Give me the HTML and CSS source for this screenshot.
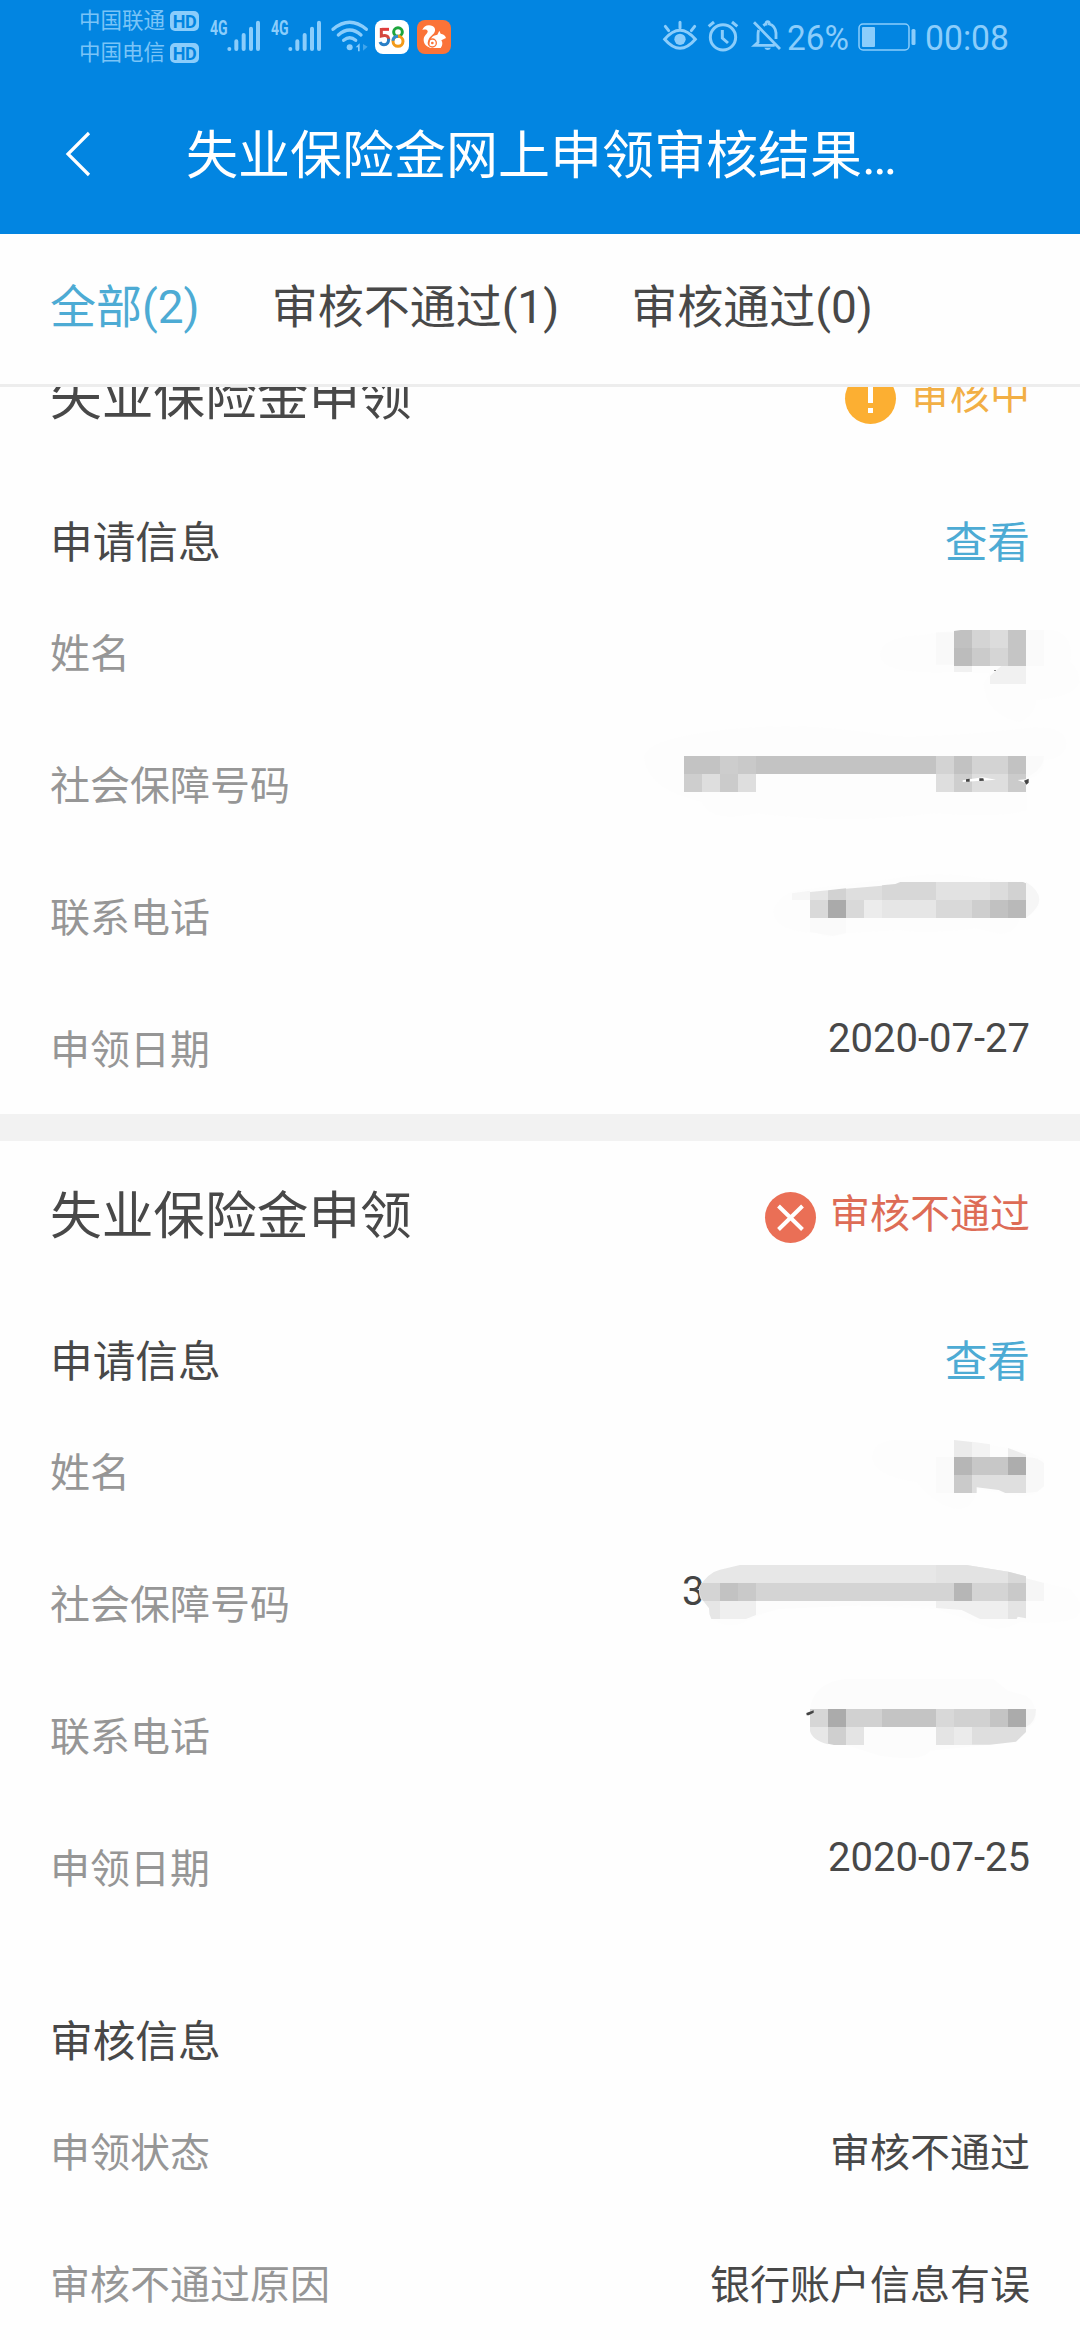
FILE: index.html
```html
<!DOCTYPE html>
<html lang="zh-CN">
<head>
<meta charset="utf-8">
<title>失业保险金网上申领审核结果</title>
<link rel="stylesheet" href="styles.css">
</head>
<body>
<header class="header">
  <div class="status">
    <div class="carriers">
      <div class="carrier"><span>中国联通</span><b class="hd">HD</b></div>
      <div class="carrier"><span>中国电信</span><b class="hd">HD</b></div>
    </div>
    <svg class="signal" width="51" height="32" viewBox="0 0 153 96"><text x="0" y="44" font-size="58" font-weight="700" textLength="53" lengthAdjust="spacingAndGlyphs">4G</text><path d="M58 87v0M79 64v23M101 45v42M123 26v61M144 8v79" stroke-width="12" stroke-linecap="round"/></svg>
    <svg class="signal" width="51" height="32" viewBox="0 0 153 96"><text x="0" y="44" font-size="58" font-weight="700" textLength="53" lengthAdjust="spacingAndGlyphs">4G</text><path d="M58 87v0M79 64v23M101 45v42M123 26v61M144 8v79" stroke-width="12" stroke-linecap="round"/></svg>
    <svg class="wifi" width="38" height="32" viewBox="0 0 114 96"><g fill="none" stroke-width="10" stroke-linecap="round"><path d="M6 28Q56-14 106 28M22 45Q56 15 90 45M38 61Q56 46 74 61"/></g><circle cx="56" cy="82" r="9"/><path d="M74 82l12-12v24h-5V82z"/><path d="M96 72v20l14-12z" opacity=".45"/></svg>
    <svg class="app" width="34" height="34" viewBox="0 0 102 102"><rect width="102" height="102" rx="24" fill="#fff"/><g fill="none" stroke-width="9"><path d="M42 28H20" stroke="#e23a3a"/><path d="M19 24v24q22-6 22 12" stroke="#d4473f"/><path d="M41 56q0 18-14 18-9 0-12-8" stroke="#297fc7"/><circle cx="69" cy="36" r="13" stroke="#1ca53c"/><circle cx="69" cy="64" r="15" stroke="#f39a18"/><path d="M54 62q0-12 15-13" stroke="#328bd0"/></g></svg>
    <svg class="app" width="34" height="34" viewBox="0 0 102 102"><rect width="102" height="102" rx="24" fill="#fb7338"/><path d="M16 30q5-14 20-14c16 0 23 13 15 24-8 9-17 13-17 25 0 9 5 16 14 19-17 0-29-11-28-26 1-13 13-17 12-24-1-6-8-6-16-4z" fill="#fff"/><path d="M38 84c-3-28 8-38 23-40l6-12 4 9q12 1 16 13l-14 7q7 11-2 23z" fill="#fff"/><circle cx="46" cy="69" r="12" fill="none" stroke="#fb7338" stroke-width="4"/><circle cx="46" cy="69" r="4" fill="#fb7338"/></svg>
    <div class="status-right">
      <svg width="34" height="32" viewBox="0 0 102 96"><g fill="none" stroke-width="9" stroke-linecap="round"><path d="M5 58Q51 4 97 58 51 112 5 58zM51 7v17M7 19l10 13M95 19L85 32"/></g><circle cx="51" cy="58" r="17"/></svg>
      <svg width="32" height="32" viewBox="0 0 96 96"><g fill="none" stroke-width="9"><circle cx="48" cy="52" r="38"/><path d="M46 30v24l17 15M5 19L21 6M91 19L75 6"/></g></svg>
      <svg width="30" height="32" viewBox="0 0 90 96"><g fill="none" stroke-width="8.500"><path d="M6 7l78 80M20 30q-2 6-2 16v21L8 76h60M34 17q6-5 8-5 0-7 5-7t5 7q18 5 20 27v18"/></g><path d="M37 83h20q-3 7-10 7t-10-7z"/></svg>
      <svg width="62" height="32" viewBox="0 0 62 32"><text x="0" y="30" font-size="35" textLength="62" lengthAdjust="spacingAndGlyphs">26%</text></svg>
      <svg class="battery" width="58" height="28" viewBox="0 0 58 28"><rect x="1" y="1" width="50" height="26" rx="4" fill="none" stroke-width="1.5"/><rect x="4" y="4" width="13" height="20" rx="1"/><rect x="53.5" y="6" width="4" height="16" rx="1.5"/></svg>
      <svg width="84" height="32" viewBox="0 0 84 32"><text x="0" y="30" font-size="35" textLength="84" lengthAdjust="spacingAndGlyphs">00:08</text></svg>
    </div>
  </div>
  <div class="nav">
    <svg class="back" width="28" height="48" viewBox="0 0 28 48"><path d="M25 3L4 24l21 21"/></svg>
    <h1>失业保险金网上申领审核结果…</h1>
  </div>
</header>
<nav class="tabs"><a class="active">全部(2)</a><a>审核不通过(1)</a><a>审核通过(0)</a></nav>
<main class="list">
  <section class="card first">
    <div class="head"><h2>失业保险金申领</h2><svg width="51" height="51" viewBox="0 0 51 51"><circle cx="25.5" cy="25.5" r="25.5" fill="#fcaf32"/><path d="M25.5 9v21M25.5 35v5" stroke="#fff" stroke-width="5"/></svg><span class="state wait">审核中</span></div>
    <div class="sub"><h3>申请信息</h3><a>查看</a></div>
    <div class="row"><label>姓名</label>
      <svg class="mosaic" viewBox="0 -42 1320 396"><path d="M720 165Q722 110 850 105L942 90H1240Q1305 110 1290 185 1320 210 1318 250 1300 290 1190 300 1180 350 1140 366 1040 350 1030 250L1050 220 942 216Q720 225 720 165z" fill="#fdfdfd"/><path d="M888 97h54v97h-54z" fill="#f9f9f9"/><path d="M1158 90h54v108h-54z" fill="#fafafa"/><path d="M942 93l20-3h34v54h-54z" fill="#c1c1c1"/><path d="M942 144h54v54h-54z" fill="#bcbcbc"/><path d="M996 90h54v54h-54z" fill="#d4d4d4"/><path d="M996 144h54v54h-54z" fill="#cbcbcb"/><path d="M1050 90h54v54h-54z" fill="#dcdcdc"/><path d="M1050 144h54v54h-54z" fill="#d5d5d5"/><path d="M1104 90h54v108h-54z" fill="#c5c5c5"/><path d="M942 198h54v18h-54zM1068 212l16-14h74v54h-108v-24z" fill="#f1f1f1"/><path d="M1062 210h6v3h-6z" fill="#888"/></svg></div>
    <div class="row"><label>社会保障号码</label>
      <svg class="mosaic" viewBox="0 354 1320 396"><path d="M12 470Q20 430 132 408 430 350 750 408 900 415 1180 382 1290 380 1278 440 1270 475 1212 480 1212 530 1160 535V630Q1100 655 880 640 620 675 350 640 210 670 185 605 20 570 12 470z" fill="#fdfdfd"/><path d="M132 468h756v54H132z" fill="#c3c3c3"/><path d="M240 468h54v54h-54z" fill="#cdcdcd"/><path d="M294 468h54v54h-54z" fill="#c9c9c9"/><path d="M888 468h54v54h-54z" fill="#d3d3d3"/><path d="M942 468h54v54h-54zM1104 468h54v54h-54z" fill="#c2c2c2"/><path d="M996 468h108v54H996z" fill="#d3d3d3"/><path d="M132 522h54v54h-54zM942 522h54v54h-54z" fill="#cecece"/><path d="M240 522h54v54h-54zM1104 522h54v54h-54z" fill="#cbcbcb"/><path d="M186 522h54v54h-54zM294 522h54v54h-54zM888 522h54v54h-54zM996 522h108v54H996z" fill="#dedede"/><path d="M1158 468h54q0 40-54 65z" fill="#fafafa"/><path d="M968 541l60-9 40 7-55 4-45 3zM1133 540l25-2v12z" fill="#fff"/><path d="M978 538l11-2v9h-11zM1018 535h12l2 7-14 1zM1152 542l14-6v12l-7 6z" fill="#444"/></svg></div>
    <div class="row"><label>联系电话</label>
      <svg class="mosaic" viewBox="0 750 1320 396"><path d="M400 930Q420 880 480 870L770 835Q900 810 1020 835L1158 846Q1200 865 1197 910 1190 945 1140 955 1130 1000 1080 1002L1010 985Q850 1005 780 990L618 1000Q570 1020 530 1000 400 995 400 930z" fill="#fdfdfd"/><path d="M456 880l54-8v28h-54zM1158 846q80 50 0 108z" fill="#f6f6f6"/><path d="M510 876l54-5v29h-54z" fill="#e5e5e5"/><path d="M564 871l54-6v35h-54z" fill="#d2d2d2"/><path d="M618 866l108-9v43H618z" fill="#dedede"/><path d="M726 856l40-4 15-6h107v54H726z" fill="#d7d7d7"/><path d="M888 846h162v54H888z" fill="#e2e2e2"/><path d="M1050 846h54v54h-54z" fill="#dcdcdc"/><path d="M1104 846h45l9 4v50h-54z" fill="#d2d2d2"/><path d="M510 900h54v54h-54zM618 900h54v54h-54zM888 900h108v54H888z" fill="#d9d9d9"/><path d="M564 900h54v54h-54z" fill="#aaa"/><path d="M672 900h54v54h-54z" fill="#ececec"/><path d="M726 900h162v54H726z" fill="#e6e6e6"/><path d="M996 900h54v54h-54z" fill="#cecece"/><path d="M1050 900h54v54h-54z" fill="#c1c1c1"/><path d="M1104 900h54v54h-54z" fill="#b9b9b9"/><path d="M510 954h108v45l-40 9-68-12z" fill="#fafafa"/></svg></div>
    <div class="row"><label>申领日期</label><span class="date">2020-07-27</span></div>
  </section>
  <section class="card">
    <div class="head"><h2>失业保险金申领</h2><svg width="51" height="51" viewBox="0 0 51 51"><circle cx="25.5" cy="25.5" r="25.5" fill="#ea6f56"/><path d="M13.5 14l24 23.500M37.500 14l-24 23.500" stroke="#fff" stroke-width="4"/></svg><span class="state fail">审核不通过</span></div>
    <div class="sub"><h3>申请信息</h3><a>查看</a></div>
    <div class="row"><label>姓名</label>
      <svg class="mosaic" viewBox="0 -72 1320 396"><path d="M696 85Q700 30 780 33L942 32 1104 56Q1212 75 1212 100V165Q1190 215 1104 195L1010 180Q1000 240 955 240 890 235 830 160 700 140 696 85z" fill="#fdfdfd"/><path d="M888 84h54v108h-54z" fill="#fafafa"/><path d="M942 33l54 6v45h-54z" fill="#ebebeb"/><path d="M996 38l54 8v38h-54z" fill="#f3f3f3"/><path d="M1104 57l54 20v7h-54z" fill="#ececec"/><path d="M942 84h54v54h-54z" fill="#b6b6b6"/><path d="M996 84h108v54H996z" fill="#c7c7c7"/><path d="M1104 84h54v54h-54z" fill="#adadad"/><path d="M942 138h54v54h-54z" fill="#cacaca"/><path d="M996 138h162v54h-62l-20-9-66-8v17h-14z" fill="#dfdfdf"/><path d="M1158 84q35 0 54 18v70l-20 16-34 4z" fill="#f8f8f8"/></svg></div>
    <div class="row"><label>社会保障号码</label>
      <svg class="mosaic" viewBox="0 324 1320 396"><path d="M1158 448L1290 480Q1340 530 1310 565 1260 590 1140 578 1080 615 1020 585L890 540Q600 525 400 540L300 585Q240 600 210 560z" fill="#fdfdfd"/><text x="126" y="529" font-size="120" fill="#444">3</text><path d="M177 500V475Q205 430 240 422L300 408H980L1110 429 1158 442V462H190V516H200Q177 520 177 485z" fill="#e7e7e7"/><path d="M888 408h90l126 20v34H888z" fill="#e3e3e3"/><path d="M1104 428l54 14v20h-54z" fill="#d8d8d8"/><path d="M184 462H1158v54H190q-20-26-6-54z" fill="#d4d4d4"/><path d="M240 462h54v54h-54z" fill="#c2c2c2"/><path d="M294 462h54v54h-54zM1104 462h54v54h-54z" fill="#c9c9c9"/><path d="M942 462h54v54h-54z" fill="#b6b6b6"/><path d="M190 516h50v54h-26q-8-15-7-32z" fill="#e6e6e6"/><path d="M240 516h108v42l-30 12h-78zM888 516h216v54h-84l-55-27-77-6z" fill="#efefef"/><path d="M1104 516h54v52l-25-5-3 7h-26z" fill="#e4e4e4"/><path d="M348 516h540v15l-220-2-250 11-70 18z" fill="#fcfcfc"/><path d="M1158 448l54 14v54h-54z" fill="#f6f6f6"/></svg></div>
    <div class="row"><label>联系电话</label>
      <svg class="mosaic" viewBox="0 720 1320 396"><path d="M510 840Q520 760 618 750H1060L1104 785 1158 800Q1188 820 1188 860 1188 885 1158 900L1100 942 870 965Q850 1000 720 980L618 948 510 900z" fill="#fcfcfc"/><path d="M510 840h54v54h-54z" fill="#d6d6d6"/><path d="M564 840h54v54h-54zM1104 840h54v54h-54z" fill="#ababab"/><path d="M618 840h108v54H618zM942 840h108v54H942z" fill="#d1d1d1"/><path d="M726 840h162v54H726zM1050 840h54v54h-54z" fill="#c4c4c4"/><path d="M888 840h54v54h-54z" fill="#d8d8d8"/><path d="M510 894h54v52q-47-12-54-40z" fill="#e7e7e7"/><path d="M564 894h54v54h-36l-18-4z" fill="#cfcfcf"/><path d="M618 894h54v54h-54zM888 894h54v54h-54z" fill="#e4e4e4"/><path d="M942 894h54v54h-54z" fill="#ebebeb"/><path d="M996 894h162v15l-30 29-78 9h-54z" fill="#dedede"/><path d="M1158 840h30q0 40-30 54z" fill="#f3f3f3"/><path d="M499 852l22-8v7l-15 8h-6z" fill="#444"/></svg></div>
    <div class="row"><label>申领日期</label><span class="date">2020-07-25</span></div>
    <div class="sub review"><h3>审核信息</h3></div>
    <div class="row"><label>申领状态</label><span>审核不通过</span></div>
    <div class="row"><label>审核不通过原因</label><span>银行账户信息有误</span></div>
  </section>
</main>
</body>
</html>
```
FILE: styles.css
```css
* { box-sizing: border-box; }
body {
  margin: 0;
  width: 1080px;
  height: 2340px;
  overflow: hidden;
  display: flex;
  flex-direction: column;
  background: #fefefe;
  color: #484848;
  font-family: Roboto, "Noto Sans CJK SC", sans-serif;
}
h1, h2, h3 { margin: 0; font-weight: 400; }
svg { display: block; flex: none; overflow: visible; }
.header { flex: none; height: 234px; background: #0285e1; }

.status { display: flex; height: 76px; padding-left: 79px; color: #8bcdfb; fill: #8bcdfb; stroke: none; }
.carriers { width: 131px; padding-top: 5px; }
.carrier { display: flex; align-items: center; gap: 5px; height: 32px; font-size: 21.5px; line-height: 32px; }
.carrier span { opacity: .88; }
.hd { width: 29px; height: 20px; border-radius: 5px; background: #8bcdfb; color: #0285e1; font-size: 18px; line-height: 21px; text-align: center; font-weight: 700; letter-spacing: -.5px; }
.signal { margin: 20px 10px 0 0; stroke: none; }
.signal path, .wifi g { stroke: #8bcdfb; fill: none; }
.wifi { margin: 20px 6px 0 -1px; }
.app { margin: 20px 8px 0 0; }
.status-right { display: flex; margin-left: auto; padding: 20px 71px 0 0; }
.status-right g, .battery rect:first-child { stroke: #8bcdfb; }
.status-right svg:nth-child(2) { margin-left: 10px; }
.status-right svg:nth-child(3) { margin-left: 13px; }
.status-right svg:nth-child(4) { margin-left: 5px; }
.status-right .battery { margin: 3px 9px 0 9px; }

.nav { display: flex; align-items: center; height: 158px; padding-left: 64px; color: #fff; }
.back { margin-top: -3px; }
.back path { fill: none; stroke: #fff; stroke-width: 3.2; }
.nav h1 { margin-left: 94px; padding-top: 3px; font-size: 52px; line-height: 78px; white-space: nowrap; }

.tabs { flex: none; display: flex; gap: 72px; height: 153px; padding: 38px 50px 0; border-bottom: 3px solid #ededed; font-size: 46px; line-height: 70px; }
.active, .sub a { color: #4dabd4; }

.list { flex: 1; min-height: 0; overflow: hidden; }
.card { border-top: 27px solid #f2f2f2; }
.card.first { border-top: 0; margin-top: -65px; }
.head, .sub, .row { display: flex; align-items: center; padding: 0 50px; }
.head { height: 148px; }
.head h2 { margin-right: auto; padding-top: 4px; font-size: 51.7px; line-height: 78px; }
.head svg { margin-top: 5px; }
.state { margin: 0 0 1px 14px; font-size: 40px; line-height: 60px; }
.wait { color: #f2af45; }
.fail { color: #dd6c56; }
.sub { height: 116px; padding-top: 30px; justify-content: space-between; font-size: 42.7px; line-height: 62px; }
.sub h3 { font-size: 42.7px; }
.sub.review { height: 152px; padding-top: 66px; }
.row { height: 132px; justify-content: space-between; font-size: 40px; line-height: 60px; }
.row label, .row span { padding-top: 5px; }
.row label { color: #969696; }
.row .date { margin-bottom: 23px; }
.mosaic { width: 440px; height: 132px; margin-right: -50px; }
```
